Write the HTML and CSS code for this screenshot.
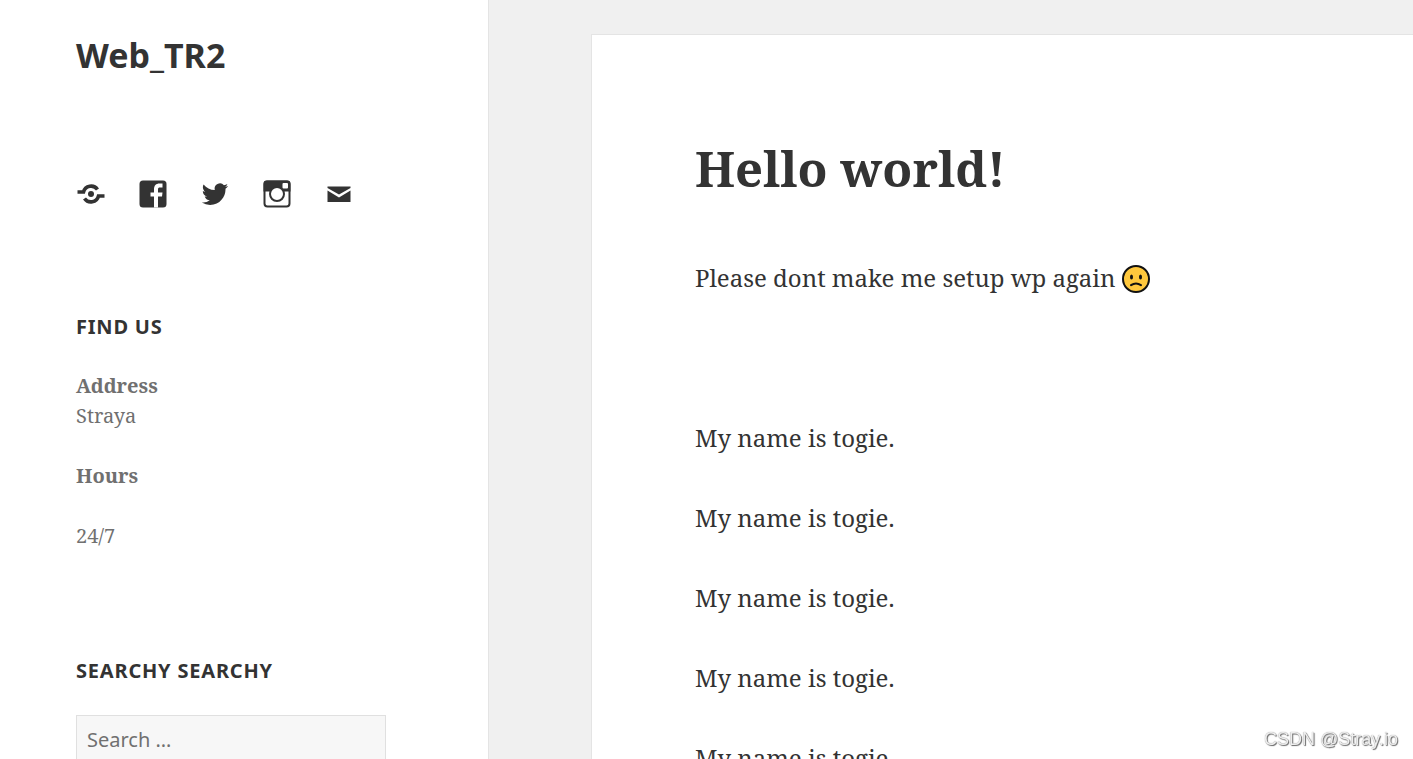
FILE: index.html
```html
<!DOCTYPE html>
<html lang="en">
<head>
  <meta charset="UTF-8">
  <meta name="viewport" content="width=device-width, initial-scale=1">
  <title>Hello world! - Web_TR2</title>
  <link rel="stylesheet" href="styles.css">
</head>
<body>

  <div class="site">
    <aside class="sidebar">
      <p class="site-title"><a href="#">Web_TR2</a></p>

      <nav class="social" aria-label="Social links">
        <a href="#" aria-label="Website">
          <svg viewBox="0 0 30 30">
            <g fill="none" stroke="currentColor" stroke-width="3.600">
              <path d="M1.500 13H7.500A7.800 7.800 0 0 1 21.500 10.500"/>
              <path d="M28.500 17H22.500A7.800 7.800 0 0 1 8.500 19.500"/>
            </g>
            <circle cx="15" cy="15" r="3" fill="currentColor"/>
          </svg>
        </a>
        <a href="#" aria-label="Facebook">
          <svg viewBox="0 0 30 30">
            <rect x="1.500" y="1.500" width="27" height="27" rx="3.500" fill="currentColor"/>
            <path fill="#fff" d="M16 28.500V17.500h-3.500v-4H16V10.500c0-4 2-6 5.500-6H24.500v4H22c-1.500 0-2 .6-2 2v3h4.500l-.5 4h-4v11z"/>
          </svg>
        </a>
        <a href="#" aria-label="Twitter">
          <svg viewBox="0 0 30 30">
            <path fill="currentColor" transform="translate(1.800 2) scale(1.100)" d="M23.950 4.570a10 10 0 0 1-2.820.77 4.960 4.960 0 0 0 2.160-2.720c-.95.56-2 .96-3.130 1.190a4.920 4.920 0 0 0-8.380 4.480C7.690 8.100 4.070 6.130 1.640 3.160a4.820 4.820 0 0 0-.67 2.480c0 1.710.87 3.210 2.190 4.100a4.900 4.900 0 0 1-2.230-.62v.06a4.920 4.920 0 0 0 3.950 4.830 5 5 0 0 1-2.210.08 4.940 4.940 0 0 0 4.600 3.420A9.870 9.870 0 0 1 0 19.540a14 14 0 0 0 7.550 2.210c9.050 0 14-7.500 14-13.990 0-.21 0-.42-.02-.63a9.940 9.940 0 0 0 2.420-2.560z"/>
          </svg>
        </a>
        <a href="#" aria-label="Instagram">
          <svg viewBox="0 0 30 30">
            <rect x="2.500" y="2.500" width="25" height="25" rx="3" fill="#fff" stroke="currentColor" stroke-width="2"/>
            <path fill="currentColor" d="M1.500 12.500V4.500a3 3 0 0 1 3-3h21a3 3 0 0 1 3 3v8z"/>
            <circle cx="15" cy="15" r="7" fill="#fff" stroke="currentColor" stroke-width="2"/>
            <rect x="20.500" y="4" width="5.500" height="5.500" rx="1" fill="#fff"/>
          </svg>
        </a>
        <a href="#" aria-label="Email">
          <svg viewBox="0 0 30 30">
            <path fill="currentColor" d="M3.500 7.500h23v1.500L15 15.500 3.500 9zM3.500 11.500 15 18.500l11.500-7V23h-23z"/>
          </svg>
        </a>
      </nav>

      <section class="widget">
        <h2 class="widget-title">Find Us</h2>
        <p><strong>Address</strong><br>Straya</p>
        <p><strong>Hours</strong></p>
        <p>24/7</p>
      </section>

      <section class="widget">
        <h2 class="widget-title">Searchy Searchy</h2>
        <form role="search">
          <input class="search-field" type="search" placeholder="Search …" aria-label="Search for">
        </form>
      </section>
    </aside>

    <main class="content">
      <article class="post">
        <h1 class="entry-title">Hello world!</h1>
        <div class="entry-content">
          <p>Please dont make me setup wp again
            <svg class="smiley" viewBox="0 0 28 28" role="img" aria-label="Sad face">
              <circle cx="14" cy="14" r="13" fill="#ffc83d" stroke="#111" stroke-width="2"/>
              <ellipse cx="9.500" cy="12" rx="1.500" ry="2.500" fill="#111"/>
              <ellipse cx="18.500" cy="12" rx="1.500" ry="2.500" fill="#111"/>
              <path d="M9 20.200q5-3.400 10 0" fill="none" stroke="#111" stroke-width="2" stroke-linecap="round"/>
            </svg>
          </p>
          <p>&nbsp;</p>
          <p>My name is togie.</p>
          <p>My name is togie.</p>
          <p>My name is togie.</p>
          <p>My name is togie.</p>
          <p>My name is togie.</p>
        </div>
      </article>
    </main>
  </div>

  <div class="watermark">CSDN @Stray.io</div>

</body>
</html>
```
FILE: styles.css
```css
* {
  box-sizing: border-box;
}
body {
  margin: 0;
  background-color: #f0f0f0;
  color: #333;
  font-family: "Noto Serif", "Liberation Serif", serif;
}
h1, h2, p {
  margin: 0;
}
a {
  color: inherit;
  text-decoration: none;
}
.site {
  display: flex;
  height: 100vh;
  overflow: hidden;
}

/* sidebar */
.sidebar {
  flex: none;
  width: 34.6%;
  padding: 32px 102px 0 76px;
  background-color: #fff;
  border-right: 1px solid #e4e4e4;
}
.site-title {
  font: bold 34px/46px "Noto Sans", sans-serif;
}
.social {
  display: flex;
  gap: 32px;
  margin-top: 101px;
}
.social svg {
  display: block;
  width: 30px;
  height: 30px;
}
.widget {
  margin-top: 103px;
  color: #707070;
  font-size: 20px;
  line-height: 30px;
}
.widget p {
  margin-bottom: 30px;
}
.widget-title {
  margin-bottom: 29px;
  color: #333;
  font: bold 20px/30px "Noto Sans", sans-serif;
  letter-spacing: 0.04em;
  text-transform: uppercase;
}
.widget + .widget {
  margin-top: 105px;
}
.search-field {
  display: block;
  width: 100%;
  height: 48px;
  padding: 0 10px;
  background-color: #f7f7f7;
  border: 1px solid #e0e0e0;
  border-radius: 0;
  font: 20px "Noto Sans", sans-serif;
}
.search-field::placeholder {
  color: #707070;
}

/* post */
.content {
  flex: 1;
  padding: 34px 0 0 102px;
}
.post {
  min-height: 100%;
  padding: 101px 0 0 103px;
  background-color: #fff;
  border: 1px solid #e4e4e4;
  border-right: 0;
}
.entry-title {
  font-size: 49px;
  line-height: 64px;
}
.entry-content {
  margin-top: 58px;
  font-size: 24px;
  line-height: 40px;
}
.entry-content p {
  margin-bottom: 40px;
}
.smiley {
  width: 28px;
  height: 28px;
  vertical-align: -6px;
}

.watermark {
  position: fixed;
  right: 15px;
  bottom: 8px;
  color: #eee;
  font: 18px/24px "Liberation Sans", sans-serif;
  text-shadow: 1px 1px 1px #666, 0 0 1px #888;
}
```
